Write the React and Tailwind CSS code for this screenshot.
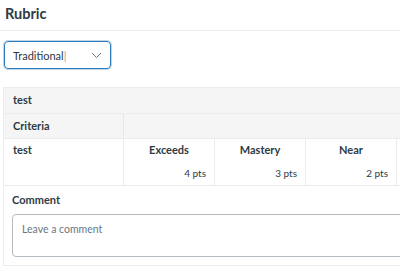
import React from 'react';

const levels = [
  { name: 'Exceeds', pts: '4 pts' },
  { name: 'Mastery', pts: '3 pts' },
  { name: 'Near', pts: '2 pts' },
];

export default function App() {
  return (
    <div className="w-[400px] h-[276px] overflow-hidden bg-white text-[#2d3b45] font-['Lato','Liberation_Sans',sans-serif]">
      {/* titulo */}
      <div className="h-[31px] border-b border-[#ebebeb] pl-[5px] pt-[4px]">
        <h2 className="text-[14.5px] font-bold leading-[20px]">Rubric</h2>
      </div>

      {/* selector */}
      <div className="pl-[4px] pt-[10px] pb-[18px]">
        <div className="w-[107px] h-[28px] flex items-center justify-between pl-[8px] pr-[8px] border border-[#2b7abc] rounded-[4px] shadow-[0_0_0_1px_rgba(43,122,188,0.3)]">
          <span className="text-[11px] leading-none">Traditional<span className="font-light">|</span></span>
          <svg width="11" height="7" viewBox="0 0 11 7" fill="none">
            <path d="M1 1l4.5 4.5L10 1" stroke="#6b7780" strokeWidth="1" />
          </svg>
        </div>
      </div>

      {/* tabla de rubrica */}
      <div className="ml-[3px] w-[440px] border border-[#ececec]">
        <div className="h-[26px] bg-[#f5f5f5] flex items-center pl-[9px] text-[11px] font-bold border-b border-[#ebebeb]">test</div>
        <div className="h-[25px] bg-[#f5f5f5] flex border-b border-[#ebebeb]">
          <div className="w-[120px] shrink-0 flex items-center pl-[9px] text-[11px] font-bold border-r border-[#e6e6e6]">Criteria</div>
          <div className="flex-1"></div>
        </div>
        <div className="h-[47px] flex border-b border-[#ebebeb]">
          <div className="w-[120px] shrink-0 pl-[9px] pt-[4px] text-[11px] font-bold leading-[14px] border-r border-[#ececec]">test</div>
          {levels.map((l) => (
            <div key={l.name} className="w-[91px] shrink-0 flex flex-col border-r border-[#ececec] pt-[4px] pr-[8px]">
              <span className="text-center pl-[8px] text-[11px] font-bold leading-[14px]">{l.name}</span>
              <span className="text-right text-[10px] leading-[14px] mt-[9px]">{l.pts}</span>
            </div>
          ))}
          <div className="w-[91px] shrink-0"></div>
        </div>

        {/* comentario */}
        <div className="pl-[8px] pt-[7px] pb-[8px]">
          <div className="text-[11px] font-bold leading-[14px]">Comment</div>
          <div className="mt-[7px] h-[43px] border border-[#b4bcc2] rounded-[4px] pl-[9px] pt-[7px] text-[10.5px] leading-[14px] text-[#6b7780]">Leave a comment</div>
        </div>
      </div>
    </div>
  );
}
